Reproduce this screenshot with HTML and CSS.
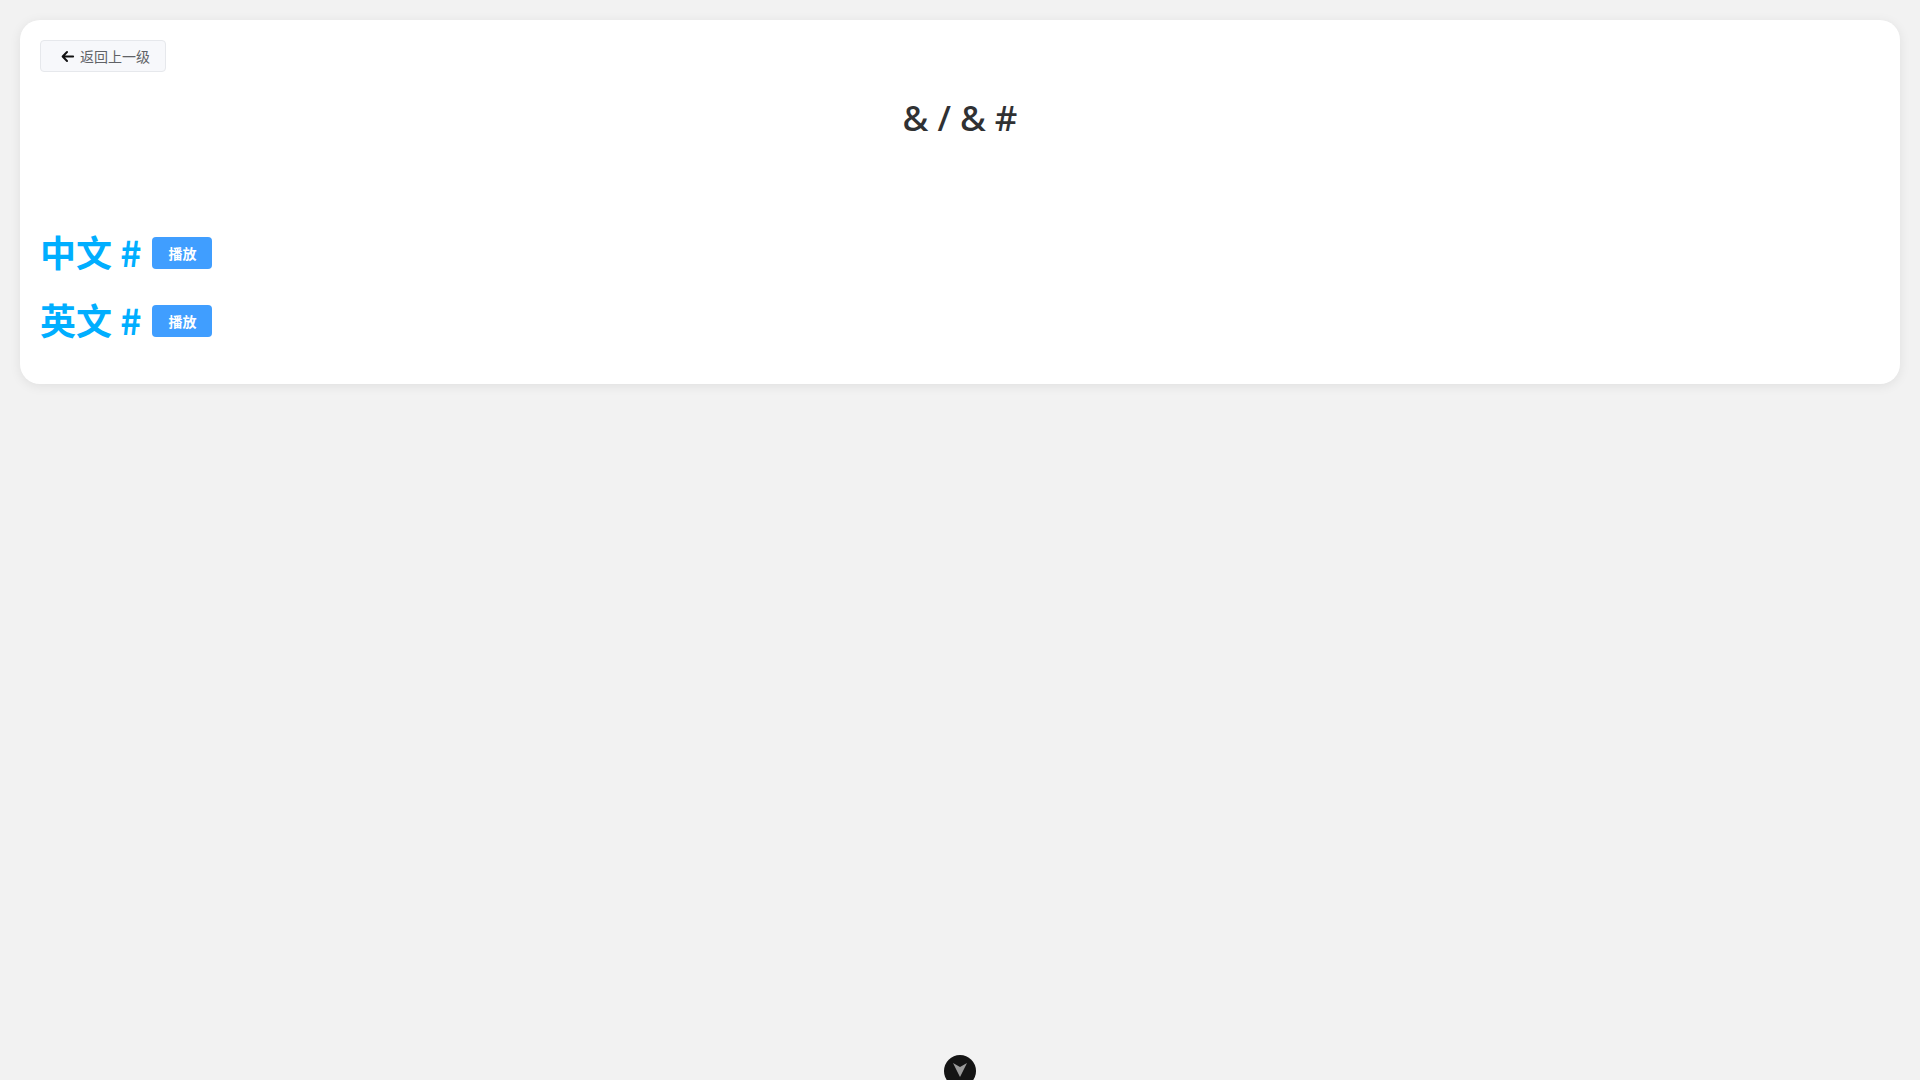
FILE: index.html
```html
<!DOCTYPE html>
<html lang="zh-CN">
<head>
<meta charset="utf-8">
<title>& / & #</title>
<link rel="stylesheet" href="styles.css">
</head>
<body>
<div class="card">
  <div class="toolbar">
    <button class="back-btn" type="button">
      <svg class="back-icon" viewBox="0 0 16 16" width="15" height="15"><path d="M14 8H3M7.5 3.2L2.8 8l4.7 4.8" fill="none" stroke="#111" stroke-width="2.1" stroke-linecap="round" stroke-linejoin="round"/></svg>
      <span>返回上一级</span>
    </button>
  </div>
  <h1 class="title">&amp; / &amp; #</h1>
  <div class="rows">
    <div class="row">
      <span class="label">中文 #</span>
      <button class="play-btn" type="button">播放</button>
    </div>
    <div class="row">
      <span class="label">英文 #</span>
      <button class="play-btn" type="button">播放</button>
    </div>
  </div>
</div>
<div class="scroll-fab">
  <svg viewBox="0 0 32 32" width="32" height="32"><path d="M9 8L16 22L23 8L16 12Z" fill="#9a9a9a"/></svg>
</div>
</body>
</html>
```
FILE: styles.css
```css
* { box-sizing: border-box; }
html, body {
  margin: 0;
  padding: 0;
  background: #f2f2f2;
  font-family: "Noto Sans", "Noto Sans CJK SC", sans-serif;
  overflow: hidden;
}
.card {
  margin: 20px;
  background: #fff;
  border-radius: 20px;
  box-shadow: 0 2px 12px rgba(0, 0, 0, 0.08);
  padding: 20px 20px 49px;
}
.toolbar {
  display: flex;
}
.back-btn {
  display: flex;
  align-items: center;
  gap: 5px;
  height: 32px;
  padding: 0 15px 0 19px;
  background: #f7f8fb;
  border: 1px solid #e6e8ec;
  border-radius: 4px;
  color: #606266;
  font-family: "Noto Sans CJK SC", sans-serif;
  font-size: 14px;
  cursor: pointer;
}
.title {
  margin: 21px 0 0;
  text-align: center;
  font-family: "Noto Sans", "Noto Sans CJK SC", sans-serif;
  font-size: 35px;
  font-weight: 500;
  line-height: 50px;
  color: #303133;
}
.rows {
  margin-top: 92px;
  display: flex;
  flex-direction: column;
  gap: 36px;
}
.row {
  display: flex;
  align-items: center;
  gap: 11px;
  height: 32px;
}
.label {
  font-family: "Noto Sans CJK SC", sans-serif;
  font-size: 36px;
  font-weight: 700;
  color: #00aeff;
  line-height: 32px;
  white-space: pre;
}
.play-btn {
  height: 32px;
  width: 60px;
  margin-top: 3px;
  border: none;
  border-radius: 4px;
  background: #409eff;
  color: #fff;
  font-family: "Noto Sans CJK SC", sans-serif;
  font-size: 14px;
  font-weight: 700;
  padding: 0;
}
.scroll-fab {
  position: fixed;
  left: 944px;
  top: 1055px;
  width: 32px;
  height: 32px;
  border-radius: 50%;
  background: #141414;
  display: flex;
  align-items: center;
  justify-content: center;
}
```
